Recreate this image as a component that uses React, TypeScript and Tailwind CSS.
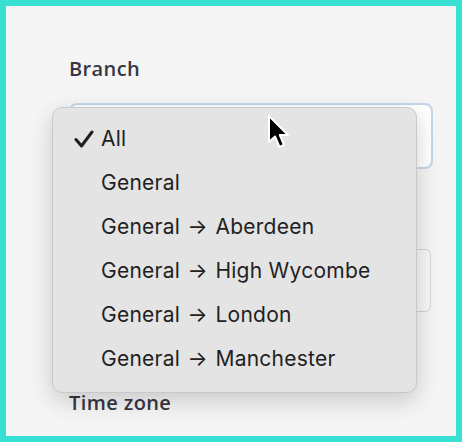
const items = [
  { name: 'All' },
  { name: 'General' },
  { name: 'General', sub: 'Aberdeen' },
  { name: 'General', sub: 'High Wycombe' },
  { name: 'General', sub: 'London' },
  { name: 'General', sub: 'Manchester' },
];

function Check() {
  return (
    <svg width="20" height="18" viewBox="0 0 20 18" aria-hidden="true">
      <path d="M2 9.5 L7.5 16 L18 2" fill="none" stroke="#1f1f1f" strokeWidth="3" strokeLinecap="round" strokeLinejoin="round" />
    </svg>
  );
}

function Cursor() {
  return (
    <svg width="26" height="38" viewBox="0 0 26 38" aria-hidden="true">
      <path
        d="M2 2 L2 28 L8 22.5 L12.5 33 L17 31 L12.8 21 L21 21 Z"
        fill="#000"
        stroke="#fff"
        strokeWidth="2"
        strokeLinejoin="round"
      />
    </svg>
  );
}

export default function App() {
  return (
    <div className="relative h-[442px] w-[462px] border-[6px] border-[#38e0d4] bg-[#f5f5f5] font-['Open_Sans',sans-serif]">
      <div className="flex flex-col pl-[63px] pr-[23px] pt-[51px]">
        <span className="text-[20px] font-semibold leading-6 tracking-[0.4px] text-[#363744]">Branch</span>
        <div className="mt-[22px] h-[66px] rounded-[8px] border-2 border-[#c6d6ea] bg-white" />
        <div className="mt-[80px] mr-[2px] h-[63px] rounded-[6px] border border-[#d4d4d4] bg-[#f7f7f7]" />
        <span className="mt-[79px] text-[20px] font-semibold leading-6 tracking-[0.4px] text-[#363744]">Time zone</span>
      </div>

      <div className="absolute left-[46px] top-[101px] w-[365px] rounded-[10px] border border-[#c9c9c9] bg-[#e4e4e4] pb-[11px] pt-[9px] shadow-[0_8px_24px_rgba(0,0,0,0.18)] font-['Inter',sans-serif]">
        {items.map((item, i) => (
          <div key={i} className="flex h-[44px] items-center text-[21px] tracking-[0.25px] text-[#222]">
            <span className="flex w-[48px] justify-end pr-[7px]">{i === 0 && <Check />}</span>
            <span>
              {item.name}
              {item.sub && (
                <>
                  {' '}
                  <span className="inline-block w-[23px] text-center">→</span> {item.sub}
                </>
              )}
            </span>
          </div>
        ))}
      </div>

      <div className="absolute left-[261px] top-[108px]">
        <Cursor />
      </div>
    </div>
  );
}
